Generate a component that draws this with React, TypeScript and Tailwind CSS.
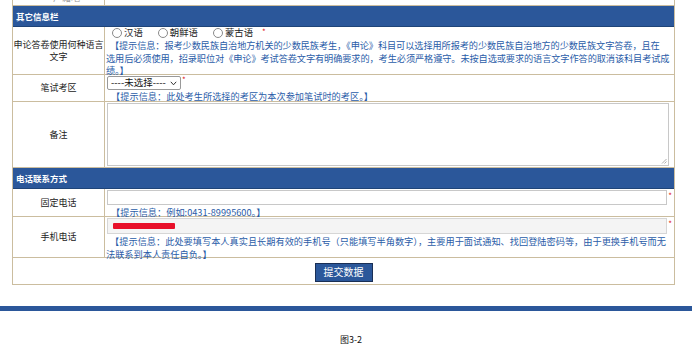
import React from 'react';

const FONT = { fontFamily: '"Noto Sans CJK SC", "Noto Sans", sans-serif' };

function Row({ label, h, children }: { label: React.ReactNode; h: string; children: React.ReactNode }) {
  return (
    <div className={`flex border-b border-[#cbbd9f] ${h}`}>
      <div className="w-[92px] shrink-0 flex items-center justify-center text-center text-[9px] leading-[12px] text-[#222] border-r border-[#cbbd9f]">
        {label}
      </div>
      <div className="flex-1 min-w-0 pl-[2px] pr-[2px] leading-none">{children}</div>
    </div>
  );
}

function Header({ title, h }: { title: string; h: string }) {
  return (
    <div className={`flex items-center bg-[#2b579a] border-b border-[#1f4478] px-[3px] text-[8.5px] font-bold text-white ${h}`}>
      {title}
    </div>
  );
}

function Radio({ text, last }: { text: string; last?: boolean }) {
  return (
    <span className={`inline-flex items-center gap-[2px] ${last ? '' : 'mr-[15px]'}`}>
      <span className="inline-block w-[10px] h-[10px] rounded-full border border-[#8a8a8a] bg-white" />
      <span>{text}</span>
    </span>
  );
}

const Hint = ({ children, className = '' }: { children: React.ReactNode; className?: string }) => (
  <div className={`text-[9.2px] leading-[12.5px] text-[#2a5ca8] ${className}`}>{children}</div>
);

const Star = () => <span className="block text-[#e02020] text-[8px] leading-[8px]">*</span>;

export default function App() {
  return (
    <div className="w-[698px] h-[350px] bg-white overflow-hidden relative" style={FONT}>
      <div className="ml-[12px] w-[663px] border-x border-b border-[#cbbd9f]">
        {/* cut-off row at the very top */}
        <div className="flex h-[6px] border-b border-[#cbbd9f] overflow-hidden">
          <div className="w-[92px] shrink-0 border-r border-[#cbbd9f] overflow-hidden">
            <div className="-mt-[8px] pl-[40px] text-[9px] leading-[12px] text-[#999]">户籍地</div>
          </div>
          <div className="flex-1" />
        </div>

        <Header title="其它信息栏" h="h-[21px]" />

        <Row label={<span>申论答卷使用何种语言<br />文字</span>} h="h-[48px]">
          <div className="flex items-center h-[12px] pl-[5px] text-[9.4px] text-[#222]">
            <Radio text="汉语" />
            <Radio text="朝鲜语" />
            <Radio text="蒙古语" last />
            <span className="ml-[9px] -mt-[2px]"><Star /></span>
          </div>
          <Hint className="-ml-[1px] tracking-[-0.1px]">
            &nbsp;&nbsp;【提示信息：报考少数民族自治地方机关的少数民族考生，《申论》科目可以选择用所报考的少数民族自治地方的少数民族文字答卷，且在<br />选用后必须使用，招录职位对《申论》考试答卷文字有明确要求的，考生必须严格遵守。未按自选或要求的语言文字作答的取消该科目考试成绩。】
          </Hint>
        </Row>

        <Row label="笔试考区" h="h-[27px]">
          <div className="flex items-start mt-[1px]">
            <div className="flex items-center justify-between w-[74px] h-[14px] border border-[#999] rounded-[2px] bg-white px-[3px] text-[9.5px] leading-none text-[#111]">
              <span>----未选择----</span>
              <svg width="7" height="5" viewBox="0 0 7 5"><path d="M0.8 0.8 L3.5 3.8 L6.2 0.8" fill="none" stroke="#333" strokeWidth="1" /></svg>
            </div>
            <span className="ml-[1px]"><Star /></span>
          </div>
          <Hint>&nbsp;&nbsp;【提示信息：此处考生所选择的考区为本次参加笔试时的考区。】</Hint>
        </Row>

        <Row label="备注" h="h-[66px]">
          <div className="relative mt-[1px] w-[562px] h-[63px] border border-[#c8c8c8] bg-white">
            <svg className="absolute right-[1px] bottom-[1px]" width="6" height="6" viewBox="0 0 6 6">
              <path d="M5.5 1 L1 5.5 M5.5 3.5 L3.5 5.5" stroke="#999" strokeWidth="0.8" />
            </svg>
          </div>
        </Row>

        <Header title="电话联系方式" h="h-[21px]" />

        <Row label="固定电话" h="h-[28px]">
          <div className="flex items-start mt-[1px]">
            <div className="w-[563px] h-[15px] border border-[#c8c8c8] bg-white" />
            <span className="ml-[1px] mt-[2px]"><Star /></span>
          </div>
          <Hint className="mt-[1px]">&nbsp;&nbsp;【提示信息：例如:0431-89995600。】</Hint>
        </Row>

        <Row label="手机电话" h="h-[41px]">
          <div className="flex items-start mt-[1px]">
            <div className="flex items-center w-[563px] h-[16px] border border-[#d6d6d6] bg-[#f4f4f4] pl-[5px]">
              <div className="w-[62px] h-[6px] bg-[#e8102a] rounded-[1px]" />
            </div>
            <span className="ml-[1px] mt-[2px]"><Star /></span>
          </div>
          <Hint className="mt-[1px] -ml-[1px]">
            &nbsp;&nbsp;【提示信息：此处要填写本人真实且长期有效的手机号（只能填写半角数字），主要用于面试通知、找回登陆密码等，由于更换手机号而无法联系到本人责任自负。】
          </Hint>
        </Row>

        <div className="flex justify-center items-center h-[26px]">
          <button className="mt-[2px] h-[19px] px-[8px] bg-[#2b579a] border border-[#1a2f55] text-white text-[10px] leading-none">
            提交数据
          </button>
        </div>
      </div>

      <div className="mt-[21px] w-[692px] h-[5px] bg-[#2b579a]" />

      <div className="mt-[23px] text-center text-[9px] leading-[12px] text-[#111] pl-[4px]">图3-2</div>
    </div>
  );
}
